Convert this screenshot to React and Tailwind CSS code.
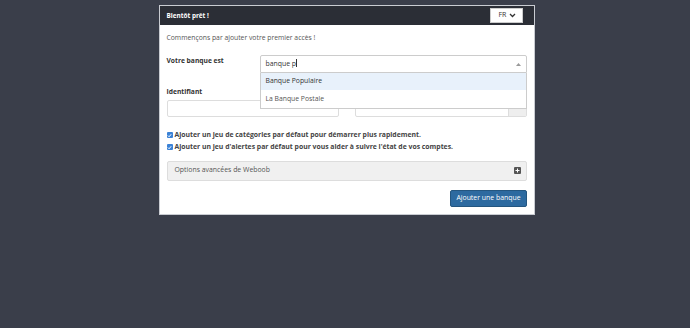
export default function App() {
  return (
    <div
      className="flex h-[328px] w-[690px] justify-center bg-[#3a3e4a] pl-[3px] pt-[5px] text-[#333]"
      style={{ fontFamily: '"Open Sans", "Liberation Sans", sans-serif' }}
    >
      <div className="flex h-[210px] w-[376px] flex-col border border-[#c9ccd2] bg-white">
        <div className="flex h-[19px] items-center justify-between bg-[#2b2e36] pl-[7px] pr-[11px]">
          <span className="text-[6.4px] font-bold text-white">Bientôt prêt !</span>
          <div className="flex h-[15px] w-[33px] items-center justify-between border border-[#ccc] bg-white pl-[8px] pr-[6px] text-[7px] text-[#333]">
            <span>FR</span>
            <svg width="7" height="5" viewBox="0 0 7 5">
              <path d="M1 1l2.5 2.5L6 1" fill="none" stroke="#333" strokeWidth="1.3" />
            </svg>
          </div>
        </div>

        <div className="relative flex flex-1 flex-col pl-[7px] pr-[7px] pt-[8px]">
          <p className="text-[6.8px] leading-[10px] text-[#555]">Commençons par ajouter votre premier accès !</p>

          <div className="mt-[12px] flex">
            <label className="w-[93px] pt-[1px] text-[6.7px] font-bold">Votre banque est</label>
            <div className="relative flex-1">
              <div className="flex h-[18px] items-center justify-between rounded-t-[2px] border border-[#ccc] bg-white px-[5px] text-[6.9px]">
                <span>
                  banque p<span className="inline-block h-[8px] w-px translate-y-[1px] bg-[#333]" />
                </span>
                <svg width="5" height="3" viewBox="0 0 5 3">
                  <path d="M0 3L2.5 0L5 3z" fill="#999" />
                </svg>
              </div>
              <div className="absolute left-0 right-0 top-[18px] z-10 border border-t-0 border-[#ccc] bg-white text-[6.8px]">
                <div className="flex h-[17px] items-center bg-[#e8f1fb] px-[5px] text-[#333]">Banque Populaire</div>
                <div className="flex h-[18px] items-center px-[5px] text-[#555]">La Banque Postale</div>
              </div>
            </div>
          </div>

          <div className="mt-[14px] flex gap-[16px]">
            <div className="flex flex-1 flex-col">
              <label className="text-[6.7px] font-bold leading-[10px]">Identifiant</label>
              <div className="mt-[3px] h-[17px] rounded-[2px] border border-[#ddd]" />
            </div>
            <div className="flex flex-1 flex-col">
              <span className="h-[10px]" />
              <div className="mt-[3px] flex h-[17px] rounded-[2px] border border-[#ddd]">
                <div className="flex-1" />
                <div className="w-[18px] border-l border-[#ddd] bg-[#eee]" />
              </div>
            </div>
          </div>

          <div className="mt-[13px] flex flex-col gap-[2px] text-[6.85px] font-bold text-[#444]">
            <div className="flex items-center gap-[2px]">
              <span className="flex h-[6px] w-[6px] items-center justify-center rounded-[1px] bg-[#3b82d6]">
                <svg width="5" height="5" viewBox="0 0 6 6">
                  <path d="M1 3l1.5 1.5L5 1.5" fill="none" stroke="white" strokeWidth="1.2" />
                </svg>
              </span>
              <span>Ajouter un jeu de catégories par défaut pour démarrer plus rapidement.</span>
            </div>
            <div className="flex items-center gap-[2px]">
              <span className="flex h-[6px] w-[6px] items-center justify-center rounded-[1px] bg-[#3b82d6]">
                <svg width="5" height="5" viewBox="0 0 6 6">
                  <path d="M1 3l1.5 1.5L5 1.5" fill="none" stroke="white" strokeWidth="1.2" />
                </svg>
              </span>
              <span>Ajouter un jeu d'alertes par défaut pour vous aider à suivre l'état de vos comptes.</span>
            </div>
          </div>

          <div className="mt-[8px] flex h-[20px] items-center justify-between rounded-[2px] border border-[#ddd] bg-[#f0f0f0] pl-[7px] pr-[5px] text-[6.9px] text-[#555]">
            <span>Options avancées de Weboob</span>
            <svg width="7" height="7" viewBox="0 0 7 7">
              <rect x="0" y="0" width="7" height="7" rx="1" fill="#555" />
              <path d="M3.5 1.5v4M1.5 3.5h4" stroke="white" strokeWidth="1" />
            </svg>
          </div>

          <div className="mt-[9px] flex justify-end">
            <button className="h-[17px] rounded-[2px] border border-[#245680] bg-[#2d6aa0] px-[5px] text-[6.9px] text-white">
              Ajouter une banque
            </button>
          </div>
        </div>
      </div>
    </div>
  );
}
